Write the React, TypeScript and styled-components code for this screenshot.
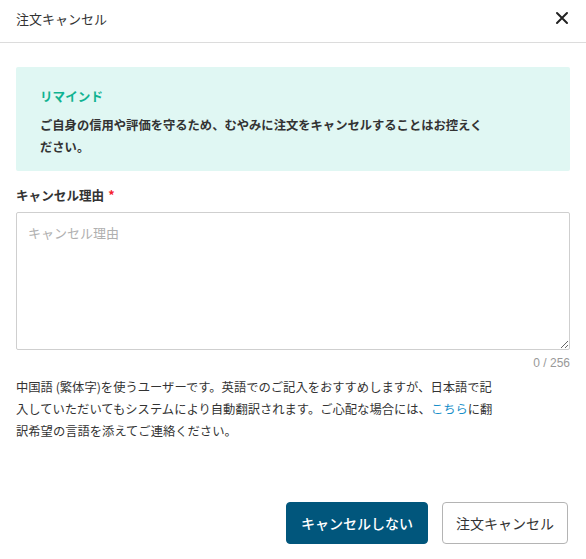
import React from 'react';
import styled, { createGlobalStyle } from 'styled-components';

const GlobalStyle = createGlobalStyle`
  html, body {
    margin: 0;
    padding: 0;
    background: #fff;
  }
  body {
    font-family: "Noto Sans CJK JP", "Noto Sans", sans-serif;
    color: #333;
  }
  * {
    box-sizing: border-box;
  }
`;

const Modal = styled.div`
  display: flex;
  flex-direction: column;
  min-height: 100vh;
  width: 586px;
`;

const Header = styled.header`
  display: flex;
  align-items: center;
  justify-content: space-between;
  height: 43px;
  padding: 0 16px 6px;
  border-bottom: 1px solid #dcdcdc;
`;

const Title = styled.h2`
  margin: 0;
  font-size: 13px;
  font-weight: 400;
  color: #333;
`;

const CloseButton = styled.button`
  display: flex;
  align-items: center;
  justify-content: center;
  width: 20px;
  height: 20px;
  padding: 0;
  margin-right: -2px;
  border: none;
  background: none;
  cursor: pointer;
`;

const Body = styled.main`
  padding: 24px 16px 0;
`;

const Alert = styled.div`
  padding: 17px 24px 13px;
  background: #e0f7f3;
  border-radius: 2px;
`;

const AlertTitle = styled.div`
  font-size: 12.6px;
  line-height: 24px;
  font-weight: 700;
  color: #10b391;
`;

const AlertText = styled.p`
  margin: 6px 0 0;
  max-width: 447px;
  font-size: 12.3px;
  line-height: 22px;
  font-weight: 700;
  color: #333;
`;

const Label = styled.label`
  display: block;
  margin-top: 13px;
  font-size: 12.6px;
  line-height: 22px;
  font-weight: 700;
  color: #333;
`;

const Required = styled.span`
  margin-left: 4px;
  color: #f5222d;
`;

const TextArea = styled.textarea`
  display: block;
  width: 100%;
  height: 138px;
  margin-top: 6px;
  padding: 10px 11px;
  border: 1px solid #cfcfcf;
  border-radius: 2px;
  font-family: inherit;
  font-size: 13px;
  line-height: 20px;
  color: #333;
  outline: none;

  &::placeholder {
    color: #b0b0b0;
  }
`;

const Counter = styled.div`
  margin-top: 4px;
  text-align: right;
  font-family: "Liberation Sans", Arial, sans-serif;
  font-size: 12px;
  line-height: 18px;
  color: #999;
`;

const Help = styled.p`
  margin: 4px 0 0;
  max-width: 484px;
  font-size: 12.3px;
  line-height: 22px;
  color: #333;
`;

const Link = styled.a`
  color: #1a8fc9;
  text-decoration: none;
`;

const Footer = styled.footer`
  display: flex;
  justify-content: flex-end;
  gap: 14px;
  margin-top: auto;
  padding: 0 18px 15px 16px;
`;

const Button = styled.button<{ $primary?: boolean }>`
  height: 42px;
  padding: 0 ${(p) => (p.$primary ? 14 : 13)}px;
  border-radius: 4px;
  border: 1px solid ${(p) => (p.$primary ? '#01567c' : '#b4b4b4')};
  background: ${(p) => (p.$primary ? '#01567c' : '#fff')};
  color: ${(p) => (p.$primary ? '#fff' : '#333')};
  font-family: inherit;
  font-size: 14px;
  font-weight: ${(p) => (p.$primary ? 500 : 400)};
  cursor: pointer;
`;

export default function App() {
  return (
    <>
      <GlobalStyle />
      <Modal>
        <Header>
          <Title>注文キャンセル</Title>
          <CloseButton aria-label="閉じる">
            <svg width="14" height="14" viewBox="0 0 14 14">
              <path d="M2 2L12 12M12 2L2 12" stroke="#222" strokeWidth="2" strokeLinecap="round" />
            </svg>
          </CloseButton>
        </Header>
        <Body>
          <Alert>
            <AlertTitle>リマインド</AlertTitle>
            <AlertText>
              ご自身の信用や評価を守るため、むやみに注文をキャンセルすることはお控えください。
            </AlertText>
          </Alert>
          <Label htmlFor="reason">
            キャンセル理由<Required>*</Required>
          </Label>
          <TextArea id="reason" placeholder="キャンセル理由" maxLength={256} />
          <Counter>0 / 256</Counter>
          <Help>
            中国語 (繁体字)を使うユーザーです。英語でのご記入をおすすめしますが、日本語で記入していただいてもシステムにより自動翻訳されます。ご心配な場合には、
            <Link href="#">こちら</Link>に翻訳希望の言語を添えてご連絡ください。
          </Help>
        </Body>
        <Footer>
          <Button $primary>キャンセルしない</Button>
          <Button>注文キャンセル</Button>
        </Footer>
      </Modal>
    </>
  );
}
